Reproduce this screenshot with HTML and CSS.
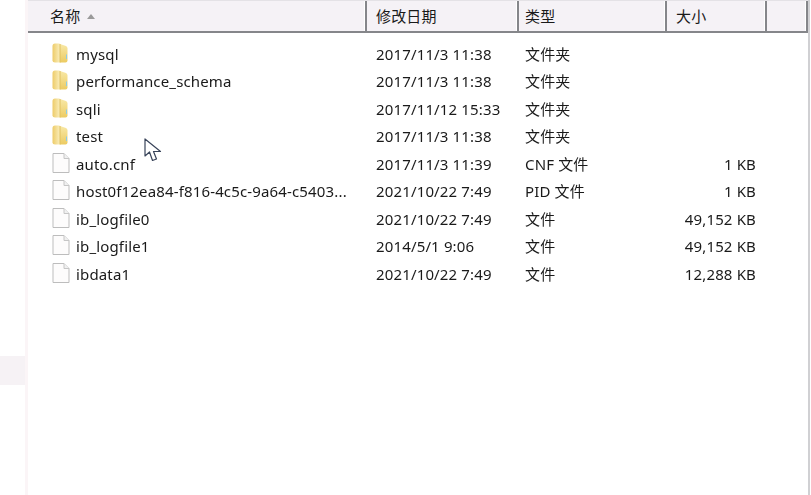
FILE: index.html
```html
<!DOCTYPE html>
<html lang="zh">
<head>
<meta charset="utf-8">
<title>Explorer</title>
<link rel="stylesheet" href="styles.css">
</head>
<body>
<svg class="defs" width="0" height="0" aria-hidden="true">
  <defs>
    <linearGradient id="fg" x1="0" y1="0" x2="0" y2="1"><stop offset="0" stop-color="#f8e8a6"/><stop offset="1" stop-color="#eccb62"/></linearGradient>
    <linearGradient id="fl" x1="0" y1="0" x2="1" y2="0"><stop offset="0" stop-color="#edcb68"/><stop offset="1" stop-color="#fbf1c2"/></linearGradient>
    <symbol id="folder" viewBox="0 0 16 20">
      <path d="M0.5 3Q0.5 0.5 3 0.5H7.5L8.5 1.5V19.5H3Q0.5 19.5 0.5 17.5Z" fill="url(#fl)"/>
      <path d="M8 1L14 3Q15.5 3.5 15.5 5.5V17.5Q15.5 19.5 13.5 19.5H8Z" fill="url(#fg)"/>
      <path d="M8 1V19.5" stroke="#dfc060" stroke-width="1" fill="none"/>
      <rect x="14" y="11.5" width="1" height="4.5" fill="#8ccbe6"/>
    </symbol>
    <symbol id="file" viewBox="0 0 18 20">
      <path d="M1 0.5H12L17 5.5V19.5H1Z" fill="#fdfcfc" stroke="#bdbdbd"/>
      <path d="M12 0.5V5.5H17" fill="#f0f0f0" stroke="#c6c6c6"/>
    </symbol>
  </defs>
</svg>
<div class="page">
  <aside class="side">
    <div class="side-top"></div>
    <div class="side-band"></div>
    <div class="side-bottom"></div>
  </aside>
  <main class="list">
    <header class="head">
      <div class="hcell c-name"><span>名称</span><i class="sort"></i></div>
      <div class="hcell c-date">修改日期</div>
      <div class="hcell c-type">类型</div>
      <div class="hcell c-size">大小</div>
      <div class="hcell c-end"></div>
    </header>
    <div class="rows">
      <div class="row"><div class="name"><svg class="ic-folder"><use href="#folder"/></svg><span>mysql</span></div><div class="date">2017/11/3 11:38</div><div class="type">文件夹</div><div class="size"></div></div>
      <div class="row"><div class="name"><svg class="ic-folder"><use href="#folder"/></svg><span>performance_schema</span></div><div class="date">2017/11/3 11:38</div><div class="type">文件夹</div><div class="size"></div></div>
      <div class="row"><div class="name"><svg class="ic-folder"><use href="#folder"/></svg><span>sqli</span></div><div class="date">2017/11/12 15:33</div><div class="type">文件夹</div><div class="size"></div></div>
      <div class="row"><div class="name"><svg class="ic-folder"><use href="#folder"/></svg><span>test</span></div><div class="date">2017/11/3 11:38</div><div class="type">文件夹</div><div class="size"></div></div>
      <div class="row"><div class="name"><svg class="ic-file"><use href="#file"/></svg><span>auto.cnf</span></div><div class="date">2017/11/3 11:39</div><div class="type">CNF 文件</div><div class="size">1 KB</div></div>
      <div class="row"><div class="name"><svg class="ic-file"><use href="#file"/></svg><span>host0f12ea84-f816-4c5c-9a64-c5403...</span></div><div class="date">2021/10/22 7:49</div><div class="type">PID 文件</div><div class="size">1 KB</div></div>
      <div class="row"><div class="name"><svg class="ic-file"><use href="#file"/></svg><span>ib_logfile0</span></div><div class="date">2021/10/22 7:49</div><div class="type">文件</div><div class="size">49,152 KB</div></div>
      <div class="row"><div class="name"><svg class="ic-file"><use href="#file"/></svg><span>ib_logfile1</span></div><div class="date">2014/5/1 9:06</div><div class="type">文件</div><div class="size">49,152 KB</div></div>
      <div class="row"><div class="name"><svg class="ic-file"><use href="#file"/></svg><span>ibdata1</span></div><div class="date">2021/10/22 7:49</div><div class="type">文件</div><div class="size">12,288 KB</div></div>
    </div>
  </main>
  <div class="scroll-edge"></div>
</div>
<svg class="cursor" width="20" height="26" viewBox="0 0 20 26" aria-hidden="true">
  <path d="M1 1V18L5.5 14L8.5 22.5L12.5 21L9.5 13.5H16.5Z" fill="#fff" stroke="#39445a" stroke-width="1.2" stroke-linejoin="round"/>
</svg>
</body>
</html>
```
FILE: styles.css
```css
* { box-sizing: border-box; }
html, body { margin: 0; height: 100%; overflow: hidden; background: #fff; }
body {
  font-family: "Noto Sans", "Noto Sans CJK SC", sans-serif;
  font-size: 15px;
  letter-spacing: 0.15px;
  color: #1a1a1a;
}
.defs { position: absolute; }
.page { display: flex; width: 811px; height: 495px; filter: blur(0.35px); }
.side {
  width: 28px;
  flex: none;
  display: flex;
  flex-direction: column;
  border-right: 3px solid #fbf5f7;
}
.side-top { height: 356px; }
.side-band { height: 29px; background: #f6f2f5; }
.side-bottom { flex: 1; }
.list { flex: 1; min-width: 0; display: flex; flex-direction: column; }
.head {
  display: grid;
  grid-template-columns: 339px 152px 148px 100px 41px;
  height: 33px;
  background: #f5f2f6;
  border-top: 1px solid #e4e2e6;
  border-bottom: 2px solid #85868a;
}
.hcell {
  display: flex;
  align-items: center;
  gap: 7px;
  padding-left: 9px;
  border-right: 2px solid #85868a;
  box-shadow: inset -1px 0 0 #fff;
  line-height: 1;
}
.c-name { padding-left: 22px; }
.c-type { padding-left: 6px; }
.sort {
  width: 0;
  height: 0;
  border-left: 4.5px solid transparent;
  border-right: 4.5px solid transparent;
  border-bottom: 5px solid #9a9a9a;
}
.rows { padding-top: 7px; display: flex; flex-direction: column; }
.row {
  display: grid;
  grid-template-columns: 339px 152px 148px 100px;
  height: 27.5px;
  align-items: center;
  line-height: 20px;
}
.name { display: flex; align-items: center; padding-left: 24px; white-space: nowrap; }
.ic-folder { width: 16px; height: 20px; margin-right: 8px; margin-bottom: 2px; flex: none; }
.ic-file { width: 18px; height: 20px; margin-right: 6px; margin-bottom: 2px; flex: none; }
.date { padding-left: 9px; }
.type { padding-left: 6px; }
.size { text-align: right; padding-right: 11px; }
.scroll-edge { width: 3px; flex: none; border-left: 2px solid #d0d0d3; }
.cursor { position: absolute; left: 144px; top: 138px; }
```
